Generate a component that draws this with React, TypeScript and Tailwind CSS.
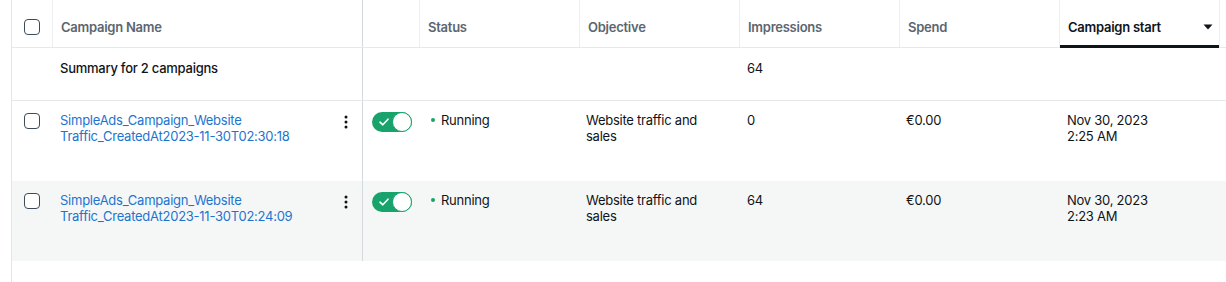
import React from 'react';

interface Campaign {
  id: string;
  name: string[];
  objective: string[];
  impressions: string;
  spend: string;
  start: string[];
}

const campaigns: Campaign[] = [
  {
    id: 'a',
    name: ['SimpleAds_Campaign_Website', 'Traffic_CreatedAt2023-11-30T02:30:18'],
    objective: ['Website traffic and', 'sales'],
    impressions: '0',
    spend: '€0.00',
    start: ['Nov 30, 2023', '2:25 AM'],
  },
  {
    id: 'b',
    name: ['SimpleAds_Campaign_Website', 'Traffic_CreatedAt2023-11-30T02:24:09'],
    objective: ['Website traffic and', 'sales'],
    impressions: '64',
    spend: '€0.00',
    start: ['Nov 30, 2023', '2:23 AM'],
  },
];

const cols = 'grid grid-cols-[40px_310px_57px_160px_160px_160px_160px_160px_1fr]';

const Checkbox = () => (
  <div className="w-4 h-4 rounded-[4px] border-[1.5px] border-[#3e4a55] bg-white" />
);

const Toggle = () => (
  <div className="w-10 h-5 rounded-full bg-[#17a36b] flex items-center justify-between pl-[7px] pr-0">
    <svg width="10" height="8" viewBox="0 0 10 8" fill="none">
      <path d="M1 4.2L3.8 6.8L9 1.2" stroke="white" strokeWidth="1.6" strokeLinecap="round" strokeLinejoin="round" />
    </svg>
    <div className="w-5 h-5 rounded-full bg-white border-[1.5px] border-[#17a36b]" />
  </div>
);

const Kebab = () => (
  <svg width="4" height="14" viewBox="0 0 4 14" fill="#0f1419">
    <circle cx="2" cy="2" r="1.5" />
    <circle cx="2" cy="7" r="1.5" />
    <circle cx="2" cy="12" r="1.5" />
  </svg>
);

const HeaderCell: React.FC<{ children?: React.ReactNode; active?: boolean; pinned?: boolean }> = ({ children, active, pinned }) => (
  <div
    className={`relative flex items-center pl-[8px] pt-[7px] text-[13px] font-semibold ${
      pinned ? 'border-l border-[#d3dadf]' : 'border-l border-[#eceff1]'
    } ${active ? 'text-[#0f1419]' : 'text-[#5b6670]'}`}
  >
    {children}
    {active && <div className="absolute left-0 right-0 bottom-[-1px] h-[3px] bg-[#0f1419]" />}
  </div>
);

export default function App() {
  return (
    <div
      className="h-[282px] bg-white overflow-hidden"
      style={{ fontFamily: 'Inter, "Noto Sans", sans-serif' }}
    >
      <div className="ml-[11px] h-full border-l border-[#e3e7ea] text-[13px] leading-4 tracking-[-0.25px] text-[#0f1419]">
        {/* header */}
        <div className={`${cols} h-[48px] border-b border-[#e6e9eb]`}>
          <div className="flex items-center justify-center pt-[7px]">
            <Checkbox />
          </div>
          <HeaderCell>Campaign Name</HeaderCell>
          <HeaderCell pinned />
          <HeaderCell>Status</HeaderCell>
          <HeaderCell>Objective</HeaderCell>
          <HeaderCell>Impressions</HeaderCell>
          <HeaderCell>Spend</HeaderCell>
          <HeaderCell active>
            <span className="flex-1">Campaign start</span>
            <svg width="10" height="6" viewBox="0 0 10 6" className="mr-[6px]">
              <path d="M0.5 0.5H9.5L5 5.5Z" fill="#0f1419" />
            </svg>
          </HeaderCell>
          <div className="border-l border-[#eceff1]" />
        </div>

        {/* summary */}
        <div className={`${cols} h-[53px] border-b border-[#e6e9eb]`}>
          <div />
          <div className="pl-[8px] pt-[12px] font-medium">Summary for 2 campaigns</div>
          <div className="border-l border-[#d3dadf]" />
          <div />
          <div />
          <div className="pl-[8px] pt-[12px]">64</div>
          <div />
          <div />
          <div />
        </div>

        {/* rows */}
        {campaigns.map((c, i) => (
          <div key={c.id} className={`${cols} h-[80px] ${i % 2 === 1 ? 'bg-[#f5f7f7]' : 'bg-white'}`}>
            <div className="flex justify-center pt-[12px]">
              <Checkbox />
            </div>
            <div className="flex items-start pl-[8px] pr-[14px] pt-[11px]">
              <div className="flex-1 text-[#1d74cf]">
                {c.name.map((l) => (
                  <div key={l}>{l}</div>
                ))}
              </div>
              <div className="pt-[3px]">
                <Kebab />
              </div>
            </div>
            <div className="border-l border-[#d3dadf] pl-[9px] pt-[11px]">
              <Toggle />
            </div>
            <div className="flex items-start pl-[12px] pt-[11px]">
              <span className="mt-[6px] mr-[6px] w-[4px] h-[4px] rounded-full bg-[#17a36b]" />
              <span>Running</span>
            </div>
            <div className="pl-[7px] pt-[11px]">
              {c.objective.map((l) => (
                <div key={l}>{l}</div>
              ))}
            </div>
            <div className="pl-[8px] pt-[11px]">{c.impressions}</div>
            <div className="pl-[7px] pt-[11px]">{c.spend}</div>
            <div className="pl-[8px] pt-[11px]">
              {c.start.map((l) => (
                <div key={l}>{l}</div>
              ))}
            </div>
            <div />
          </div>
        ))}
      </div>
    </div>
  );
}
